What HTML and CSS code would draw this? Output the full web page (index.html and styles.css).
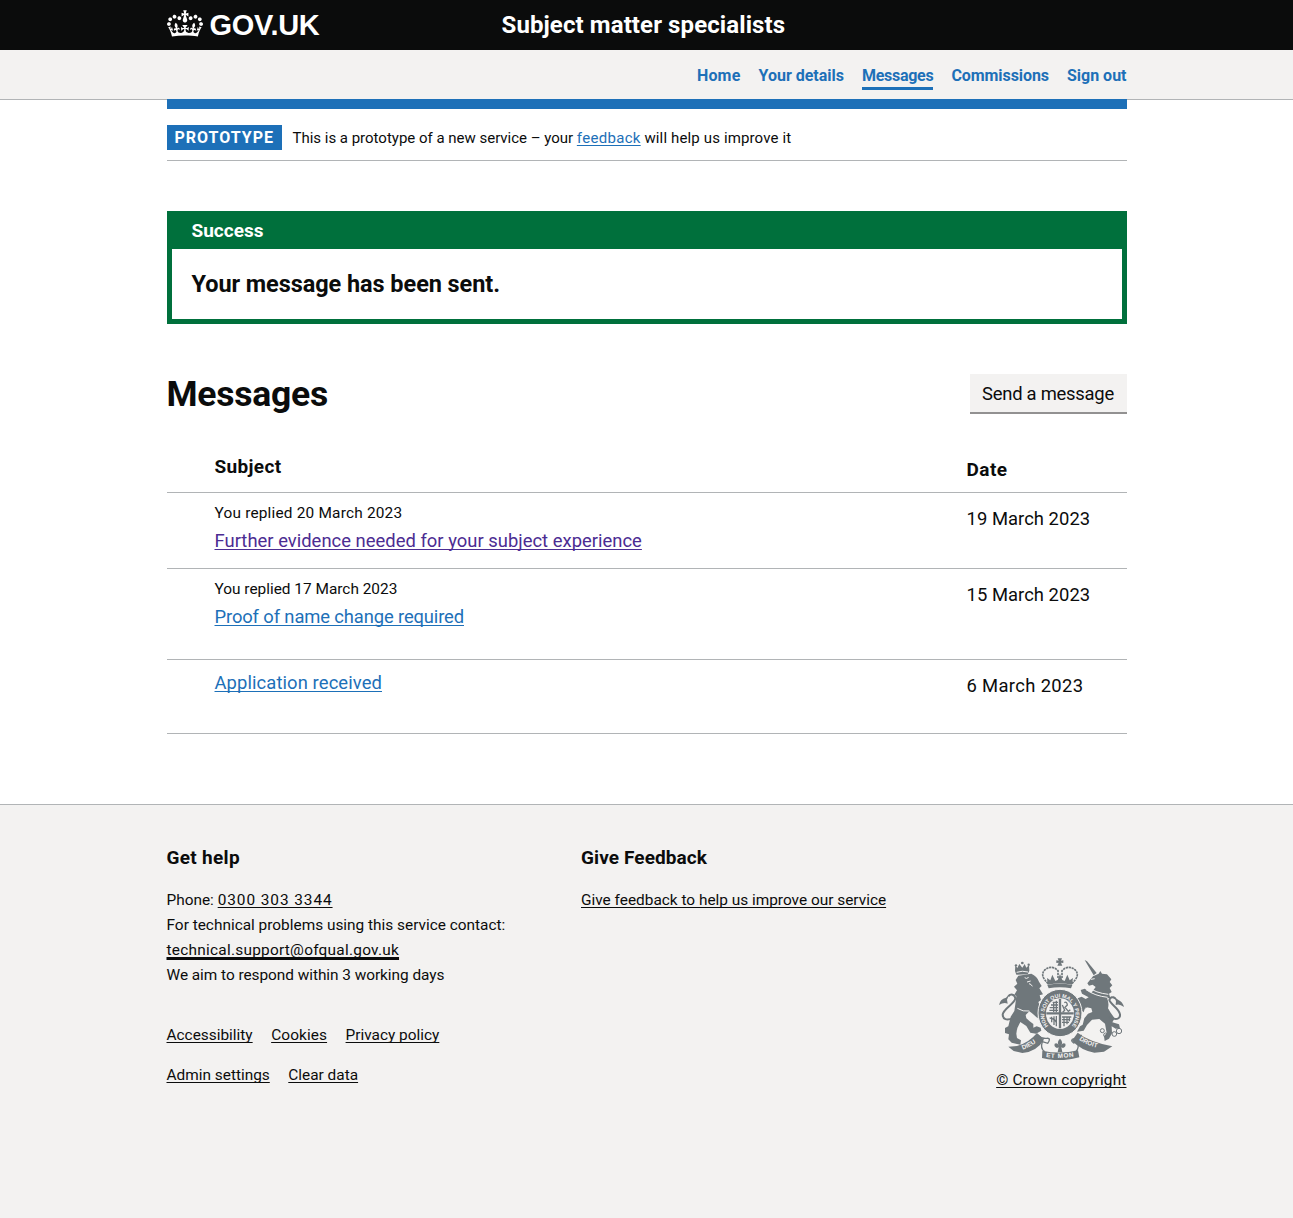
FILE: index.html
```html
<!DOCTYPE html>
<html lang="en">
<head>
<meta charset="utf-8">
<title>Messages – Subject matter specialists – GOV.UK</title>
<link rel="stylesheet" href="styles.css">
</head>
<body>
<header class="header">
  <div class="container header-row">
    <a class="logo" href="#">
      <svg class="crown" viewBox="0 0 132 97" width="36" height="27" fill="currentColor" aria-hidden="true"><path fill-rule="evenodd" d="M25 30.2c3.5 1.5 7.7-.2 9.1-3.7 1.5-3.6-.2-7.8-3.9-9.2-3.6-1.4-7.6.3-9.1 3.9-1.4 3.5.3 7.5 3.9 9zM9 39.5c3.6 1.5 7.8-.2 9.2-3.7 1.5-3.6-.2-7.8-3.9-9.1-3.6-1.5-7.6.2-9.1 3.8-1.4 3.5.3 7.5 3.8 9zM4.4 57.2c3.5 1.5 7.7-.2 9.1-3.8 1.5-3.6-.2-7.7-3.9-9.1-3.5-1.5-7.6.3-9.1 3.8-1.4 3.5.3 7.6 3.9 9.1zm38.3-21.4c3.5 1.5 7.7-.2 9.1-3.8 1.5-3.6-.2-7.7-3.9-9.1-3.6-1.5-7.6.3-9.1 3.8-1.3 3.6.4 7.7 3.9 9.1zm64.4-5.6c-3.6 1.5-7.8-.2-9.1-3.7-1.5-3.6.2-7.8 3.8-9.2 3.6-1.4 7.7.3 9.2 3.9 1.3 3.5-.4 7.5-3.9 9zm15.9 9.3c-3.6 1.5-7.7-.2-9.1-3.7-1.5-3.6.2-7.8 3.7-9.1 3.6-1.5 7.7.2 9.2 3.8 1.5 3.5-.3 7.5-3.8 9zm4.7 17.7c-3.6 1.5-7.8-.2-9.2-3.8-1.5-3.6.2-7.7 3.9-9.1 3.6-1.5 7.7.3 9.2 3.8 1.3 3.5-.4 7.6-3.9 9.1zM89.3 35.8c-3.6 1.5-7.8-.2-9.2-3.8-1.4-3.6.2-7.7 3.9-9.1 3.6-1.5 7.7.3 9.2 3.8 1.4 3.6-.3 7.7-3.9 9.1zM69.7 17.7l8.9 4.7V9.3l-8.9 2.8c-.2-.3-.5-.6-.9-.9L72.4 0H59.6l3.5 11.2c-.3.3-.6.5-.9.9l-8.8-2.8v13.1l8.8-4.7c.3.3.6.7.9.9l-5 15.4v.1c-.2.8-.4 1.6-.4 2.4 0 4.1 3.1 7.5 7 8.1h.2c.3 0 .7.1 1 .1.4 0 .7 0 1-.1h.2c4-.6 7.1-4.1 7.1-8.1 0-.8-.1-1.7-.4-2.4V34l-5.1-15.4c.4-.2.7-.6 1-.9zM66 92.8c16.9 0 32.8 1.1 47.1 3.2 4-16.9 8.9-26.7 14-33.5l-9.6-3.4c1 4.9 1.1 7.2 0 10.2-1.5-1.4-3-4.3-4.2-8.7L108.6 76c2.8-2 5-3.2 7.5-3.3-4.4 9.4-10 11.9-13.6 11.2-4.3-.8-6.3-4.6-5.6-7.9 1-4.7 5.7-5.9 8-.5 4.3-8.7-3-11.4-7.6-8.8 7.1-7.2 7.9-13.5 2.1-21.1-8 6.1-8.1 12.3-4.5 20.8-4.7-5.4-12.1-2.5-9.5 6.2 3.4-5.2 7.9-2 7.2 3.1-.6 4.3-6.4 7.8-13.5 7.2-10.3-.9-10.9-8-11.2-13.8 2.5-.5 7.1 1.8 11 7.3L80.2 60c-4.1 4.4-8 5.3-12.3 5.4 1.4-4.4 8-11.6 8-11.6H55.5s6.4 7.2 7.9 11.6c-4.2-.1-8-1-12.3-5.4l1.4 16.4c3.9-5.5 8.5-7.7 10.9-7.3-.3 5.8-.9 12.8-11.1 13.8-7.2.6-12.9-2.9-13.5-7.2-.7-5 3.8-8.3 7.1-3.1 2.7-8.7-4.6-11.6-9.4-6.2 3.7-8.5 3.6-14.7-4.6-20.8-5.8 7.6-5 13.9 2.2 21.1-4.7-2.6-11.9.1-7.7 8.8 2.3-5.5 7.1-4.2 8.1.5.7 3.3-1.3 7.1-5.7 7.9-3.5.7-9-1.8-13.5-11.2 2.5.1 4.7 1.3 7.5 3.3l-4.7-15.4c-1.2 4.4-2.7 7.2-4.3 8.7-1.1-3-.9-5.3 0-10.2l-9.5 3.4c5 6.9 9.9 16.7 14 33.5 14.8-2.1 30.8-3.2 47.7-3.2z"/></svg>
      <span class="logo-text">GOV.UK</span>
    </a>
    <a class="service-name" href="#">Subject matter specialists</a>
  </div>
</header>

<nav class="nav">
  <ul class="container nav-list">
    <li><a class="nav-home" href="#">Home</a></li>
    <li><a class="nav-details" href="#">Your details</a></li>
    <li><a class="nav-current" href="#">Messages</a></li>
    <li><a class="nav-commissions" href="#">Commissions</a></li>
    <li><a href="#">Sign out</a></li>
  </ul>
</nav>

<div class="container">
  <div class="phase-banner">
    <strong class="tag">PROTOTYPE</strong>
    <span class="phase-text">This is a prototype of a new service – your <a class="feedback" href="#">feedback</a> <span class="phase-end">will help us improve it</span></span>
  </div>

  <main>
    <section class="notification">
      <h2 class="notification-title">Success</h2>
      <p class="notification-body">Your message has been sent.</p>
    </section>

    <div class="title-row">
      <h1>Messages</h1>
      <button class="button" type="button">Send a message</button>
    </div>

    <div class="messages">
      <div class="row row-head">
        <div class="cell-subject"><span class="th-subject">Subject</span></div>
        <div class="cell-date th-date">Date</div>
      </div>
      <div class="row row-first">
        <div class="cell-subject">
          <p class="replied">You replied 20 March 2023</p>
          <a class="link visited" href="#">Further evidence needed for your subject experience</a>
        </div>
        <div class="cell-date">19 March 2023</div>
      </div>
      <div class="row row-second">
        <div class="cell-subject">
          <p class="replied">You replied 17 March 2023</p>
          <a class="link proof" href="#">Proof of name change required</a>
        </div>
        <div class="cell-date">15 March 2023</div>
      </div>
      <div class="row row-third">
        <div class="cell-subject">
          <a class="link received" href="#">Application received</a>
        </div>
        <div class="cell-date date-short">6 March 2023</div>
      </div>
    </div>
  </main>
</div>

<footer class="footer">
  <div class="container footer-grid">
    <section class="help">
      <h2 class="help-title">Get help</h2>
      <p>Phone: <a class="phone" href="#">0300 303 3344</a></p>
      <p>For technical problems using this service contact:</p>
      <p><a class="email" href="#">technical.support@ofqual.gov.uk</a></p>
      <p class="respond">We aim to respond within 3 working days</p>
      <ul class="footer-links">
        <li><a href="#">Accessibility</a></li>
        <li><a class="cookies" href="#">Cookies</a></li>
        <li><a href="#">Privacy policy</a></li>
      </ul>
      <ul class="footer-links">
        <li><a href="#">Admin settings</a></li>
        <li><a href="#">Clear data</a></li>
      </ul>
    </section>
    <section class="give">
      <h2>Give Feedback</h2>
      <p><a href="#">Give feedback to help us improve our service</a></p>
    </section>
    <div class="copyright">
      <svg class="crest" viewBox="42 39 375 306" width="125" height="102" aria-hidden="true">
        <defs>
          <path id="garter" d="M190 243A47 51 0 1 1 262 240"/>
          <path id="scroll-left" d="M113 314Q142 304 167 281"/>
          <path id="scroll-mid" d="M183 336Q225 343 275 333"/>
          <path id="scroll-right" d="M282 284Q308 304 352 311"/>
        </defs>
        <g class="ink">
          <!-- lion -->
          <path d="M94 89L90 78 91 60 97 69 103 57 112 68 119 57 124 68 132 60 133 77 128 88Z"/>
          <circle cx="112" cy="54" r="4"/><circle cx="93" cy="61" r="3.5"/><circle cx="131" cy="59" r="3.5"/>
          <path d="M100 92L139 86Q156 93 162 110L170 123 163 130 174 148 164 151 168 165 160 171Q168 190 174 211L160 207 158 220 148 211Q140 203 133 199L122 210 124 220 134 229 145 237 145 248 155 244 167 248 169 257 153 266 136 263 124 243 106 231Q95 248 94 266L96 279 108 286 106 299 80 293 70 283 72 268 60 264 60 249 70 244 77 215 88 198 91 178 94 153 88 149 96 136 87 125 97 116 92 105Z"/>
          <path d="M42 180Q45 162 63 158L74 146 66 164 68 176Q57 170 42 180Z"/>
          <!-- unicorn -->
          <path d="M299 45L306 49 335 84 326 91Z"/>
          <path d="M307 115L324 94 341 86 346 78 351 86 366 88 379 103 374 111 382 121 374 129 380 141 372 146 376 159 366 160Q373 174 369 190L377 203 389 220 382 232 402 238 405 250 392 251 380 244 381 265 372 281 359 288 357 274 365 264 360 236 343 222 321 224 306 240 296 257 276 260 285 244 293 239 298 220 309 206 322 201 319 190 301 186 296 202 281 190 274 174 278 160 290 155 302 162 311 157 291 146 287 135 299 131 319 144 332 126 323 119 312 122Z"/>
          <path d="M417 186Q413 170 399 164L384 152 393 168 392 180Q403 175 417 186Z"/>
          <!-- supporters' scroll -->
          <path d="M70 305L96 303Q132 293 156 264L177 284Q155 320 112 324L86 318Z"/>
          <path d="M278 263Q310 289 382 304L357 320 328 323Q289 316 261 287Z"/>
          <path d="M172 317Q225 329 279 316L283 337Q225 353 171 339Z"/>
          <!-- crown -->
          <path d="M218 40H231L228 47 235 46V54L228 53 232 62H217L221 53 214 54V46L221 47Z"/>
          <path d="M186 99L196 106 202 89 211 108 218 105 225 87 232 105 239 108 247 89 254 106 264 99 261 119Q225 112 188 119Z"/>
          <path d="M187 120Q225 113 262 120L258 130Q225 124 191 130Z"/>
        </g>
        <!-- garter and shield -->
        <ellipse class="garter-band" cx="225" cy="204" rx="66" ry="71"/>
        <ellipse class="shield" cx="225" cy="206" rx="42" ry="46"/>
        <g class="lines">
          <path d="M190 116Q163 92 179 75 199 58 219 77V101M260 116Q287 92 271 75 251 58 231 77V101" stroke-width="5" stroke-dasharray="7 2"/>
          <path d="M84 220Q54 230 53 209C55 190 88 178 91 160 89 147 77 146 70 154M374 218Q407 229 405 208C402 190 377 179 373 165Q378 151 391 160" stroke-width="6"/>
          <path d="M158 270Q170 282 185 280T188 295L172 290Q165 310 179 320M290 270Q278 283 268 281 253 284 266 294L277 290Q284 307 273 319" stroke-width="4"/>
          <path d="M225 162V250M184 205H266" stroke-width="7"/>
          <path d="M194 188H219M193 196H219M198 180H219M203 172H219M206 170V201M214 167V202M194 219Q211 221 215 235M200 215V232M207 214V240M214 213V244M231 216H259M231 224H256M231 232H252M237 214V244M246 214V238M253 214V229M238 173Q246 168 247 180L240 187 250 199 256 194M232 180L239 196 233 202" stroke-width="4"/>
          <circle cx="374" cy="220" r="5"/><circle cx="352" cy="257" r="6"/><circle cx="362" cy="270" r="6"/><circle cx="388" cy="267" r="7"/><circle cx="402" cy="258" r="8"/><circle cx="300" cy="184" r="5"/>
        </g>
        <g class="paper-lines">
          <path d="M119 98Q124 103 131 97M126 111L137 108M132 116Q139 117 142 124M303 134Q330 153 368 157M309 126Q332 144 370 148M318 103L329 101M95 82Q112 76 129 81M97 190Q114 201 133 198"/>
        </g>
        <path class="ink" d="M225 281Q236 292 228 302 233 292 241 296 244 305 234 309L229 307 232 321H218L221 307 216 309Q206 305 209 296 217 292 222 302 214 292 225 281Z"/>
        <g class="motto">
          <text class="motto-garter"><textPath href="#garter">HONI SOIT QUI MAL Y PENSE</textPath></text>
          <text><textPath href="#scroll-left">DIEU</textPath></text>
          <text class="motto-mid"><textPath href="#scroll-mid">ET MON</textPath></text>
          <text><textPath href="#scroll-right">DROIT</textPath></text>
        </g>
      </svg>
      <a class="crown-link" href="#">© Crown copyright</a>
    </div>
  </div>
</footer>
</body>
</html>
```
FILE: styles.css
```css
* { box-sizing: border-box; }

body {
  margin: 0;
  background: #fff;
  color: #0b0c0c;
  font: 400 15.4px/25px Roboto, "Noto Sans", sans-serif;
}

h1, h2, p, ul { margin: 0; padding: 0; }
ul { list-style: none; }

a {
  color: inherit;
  text-decoration-thickness: 1px;
  text-underline-offset: 2px;
  text-decoration-skip-ink: none;
}

.container {
  width: 960px;
  margin: 0 auto;
}

/* Header */
.header { background: #0b0c0c; color: #fff; }
.header-row { display: flex; height: 50px; }
.logo {
  display: flex;
  width: 335px;
  padding-top: 10px;
  text-decoration: none;
}
.crown { display: block; }
.logo-text {
  margin-left: 7px;
  font: 700 29px/30px "Liberation Sans", Arial, sans-serif;
  letter-spacing: -0.3px;
}
.service-name {
  font-size: 24px;
  font-weight: 700;
  line-height: 50px;
  letter-spacing: 0.1px;
  text-decoration: none;
}

/* Navigation */
.nav {
  height: 50px;
  background: #f3f2f1;
  border-bottom: 1px solid #b1b4b6;
}
.nav-list {
  display: flex;
  justify-content: flex-end;
  gap: 18px;
  padding-top: 13px;
  color: #1d70b8;
  font-size: 16px;
  font-weight: 700;
}
.nav-list a { display: block; height: 27px; text-decoration: none; }
.nav-home { letter-spacing: 0.2px; }
.nav-details { letter-spacing: -0.01px; }
.nav-list .nav-current { border-bottom: 3px solid #1d70b8; letter-spacing: -0.27px; }
.nav-commissions { letter-spacing: -0.08px; }

/* Phase banner */
.phase-banner {
  display: flex;
  height: 62px;
  margin-top: -1px;
  padding-top: 16px;
  border-top: 10px solid #1d70b8;
  border-bottom: 1px solid #b1b4b6;
}
.tag {
  width: 115px;
  height: 25px;
  padding-left: 8px;
  background: #1d70b8;
  color: #fff;
  font-size: 16px;
  letter-spacing: 1px;
}
.phase-text { margin-left: 11px; font-size: 15px; line-height: 26px; letter-spacing: -0.01px; }
.feedback { color: #1d70b8; letter-spacing: 0.3px; }
.phase-end { letter-spacing: 0.14px; }

/* Notification */
.notification {
  margin-top: 50px;
  border: 5px solid #00703c;
  border-top-width: 0;
}
.notification-title {
  height: 38px;
  padding-left: 20px;
  background: #00703c;
  color: #fff;
  font-size: 19px;
  line-height: 39px;
}
.notification-body {
  height: 70px;
  padding-left: 20px;
  font-size: 23.5px;
  font-weight: 700;
  line-height: 70px;
  letter-spacing: -0.07px;
}

/* Title */
.title-row {
  display: flex;
  justify-content: space-between;
  align-items: flex-start;
  margin-top: 50px;
}
h1 {
  font-size: 35.5px;
  line-height: 40px;
  letter-spacing: -0.25px;
}
.button {
  width: 157px;
  height: 40px;
  padding: 2px 0 0;
  border: 0;
  border-bottom: 2px solid #929191;
  background: #f3f2f1;
  color: #0b0c0c;
  font: 400 18.4px/36px Roboto, "Noto Sans", sans-serif;
  letter-spacing: -0.25px;
}

/* Messages */
.messages { margin-top: 28px; }
.row {
  display: grid;
  grid-template-columns: 752px 160px;
  padding-left: 48px;
  border-bottom: 1px solid #b1b4b6;
}
.row-head { height: 51px; font-weight: 700; font-size: 19px; }
.row-first { height: 76px; }
.row-second { height: 91px; }
.row-third { height: 74px; }
.row-head .cell-subject { padding-top: 12px; letter-spacing: 0.35px; }
.row .th-date { padding-top: 15px; font-size: 19px; letter-spacing: 0.45px; }
.cell-subject { padding-top: 8px; }
.row-third .cell-subject { padding-top: 10px; }
.replied { height: 27px; letter-spacing: 0.2px; }
.row-second .replied { letter-spacing: 0; }
.link { color: #1d70b8; font-size: 18.4px; letter-spacing: 0.02px; }
.visited { color: #4c2c92; }
.proof { letter-spacing: -0.13px; }
.received { letter-spacing: 0.1px; }
.cell-date { padding-top: 13px; font-size: 18.4px; letter-spacing: 0.05px; }
.date-short { letter-spacing: 0.35px; }

/* Footer */
.footer {
  height: 414px;
  margin-top: 70px;
  border-top: 1px solid #b1b4b6;
  background: #f3f2f1;
}
.footer-grid {
  display: grid;
  grid-template-columns: 414.5px 1fr 131px;
  padding-top: 40px;
}
.footer h2 {
  margin-bottom: 18px;
  font-size: 19px;
  letter-spacing: 0.1px;
}
.footer .help-title { letter-spacing: 0.3px; }
.phone { letter-spacing: 0.93px; }
.email {
  letter-spacing: 0.25px;
  text-decoration-thickness: 3px;
}
.respond { letter-spacing: -0.04px; }
.footer-links { display: flex; gap: 18.5px; margin-top: 15px; }
.respond + .footer-links { margin-top: 35px; }
.cookies { letter-spacing: 0.1px; }
.copyright { padding-top: 113px; text-align: right; }
.crest { display: block; margin: 0 auto 8px 3px; }
.crown-link { letter-spacing: 0.17px; white-space: nowrap; }

.ink { fill: #6f777b; }
.garter-band { fill: #6f777b; stroke: #f3f2f1; stroke-width: 3; }
.shield { fill: #f3f2f1; }
.lines { fill: none; stroke: #6f777b; stroke-width: 3; }
.paper-lines { fill: none; stroke: #f3f2f1; stroke-width: 3; }
.motto { fill: #f3f2f1; font: 700 19px "Liberation Sans", Arial, sans-serif; }
.motto-garter { font-size: 16px; }
.motto-mid { letter-spacing: 2px; }
```
